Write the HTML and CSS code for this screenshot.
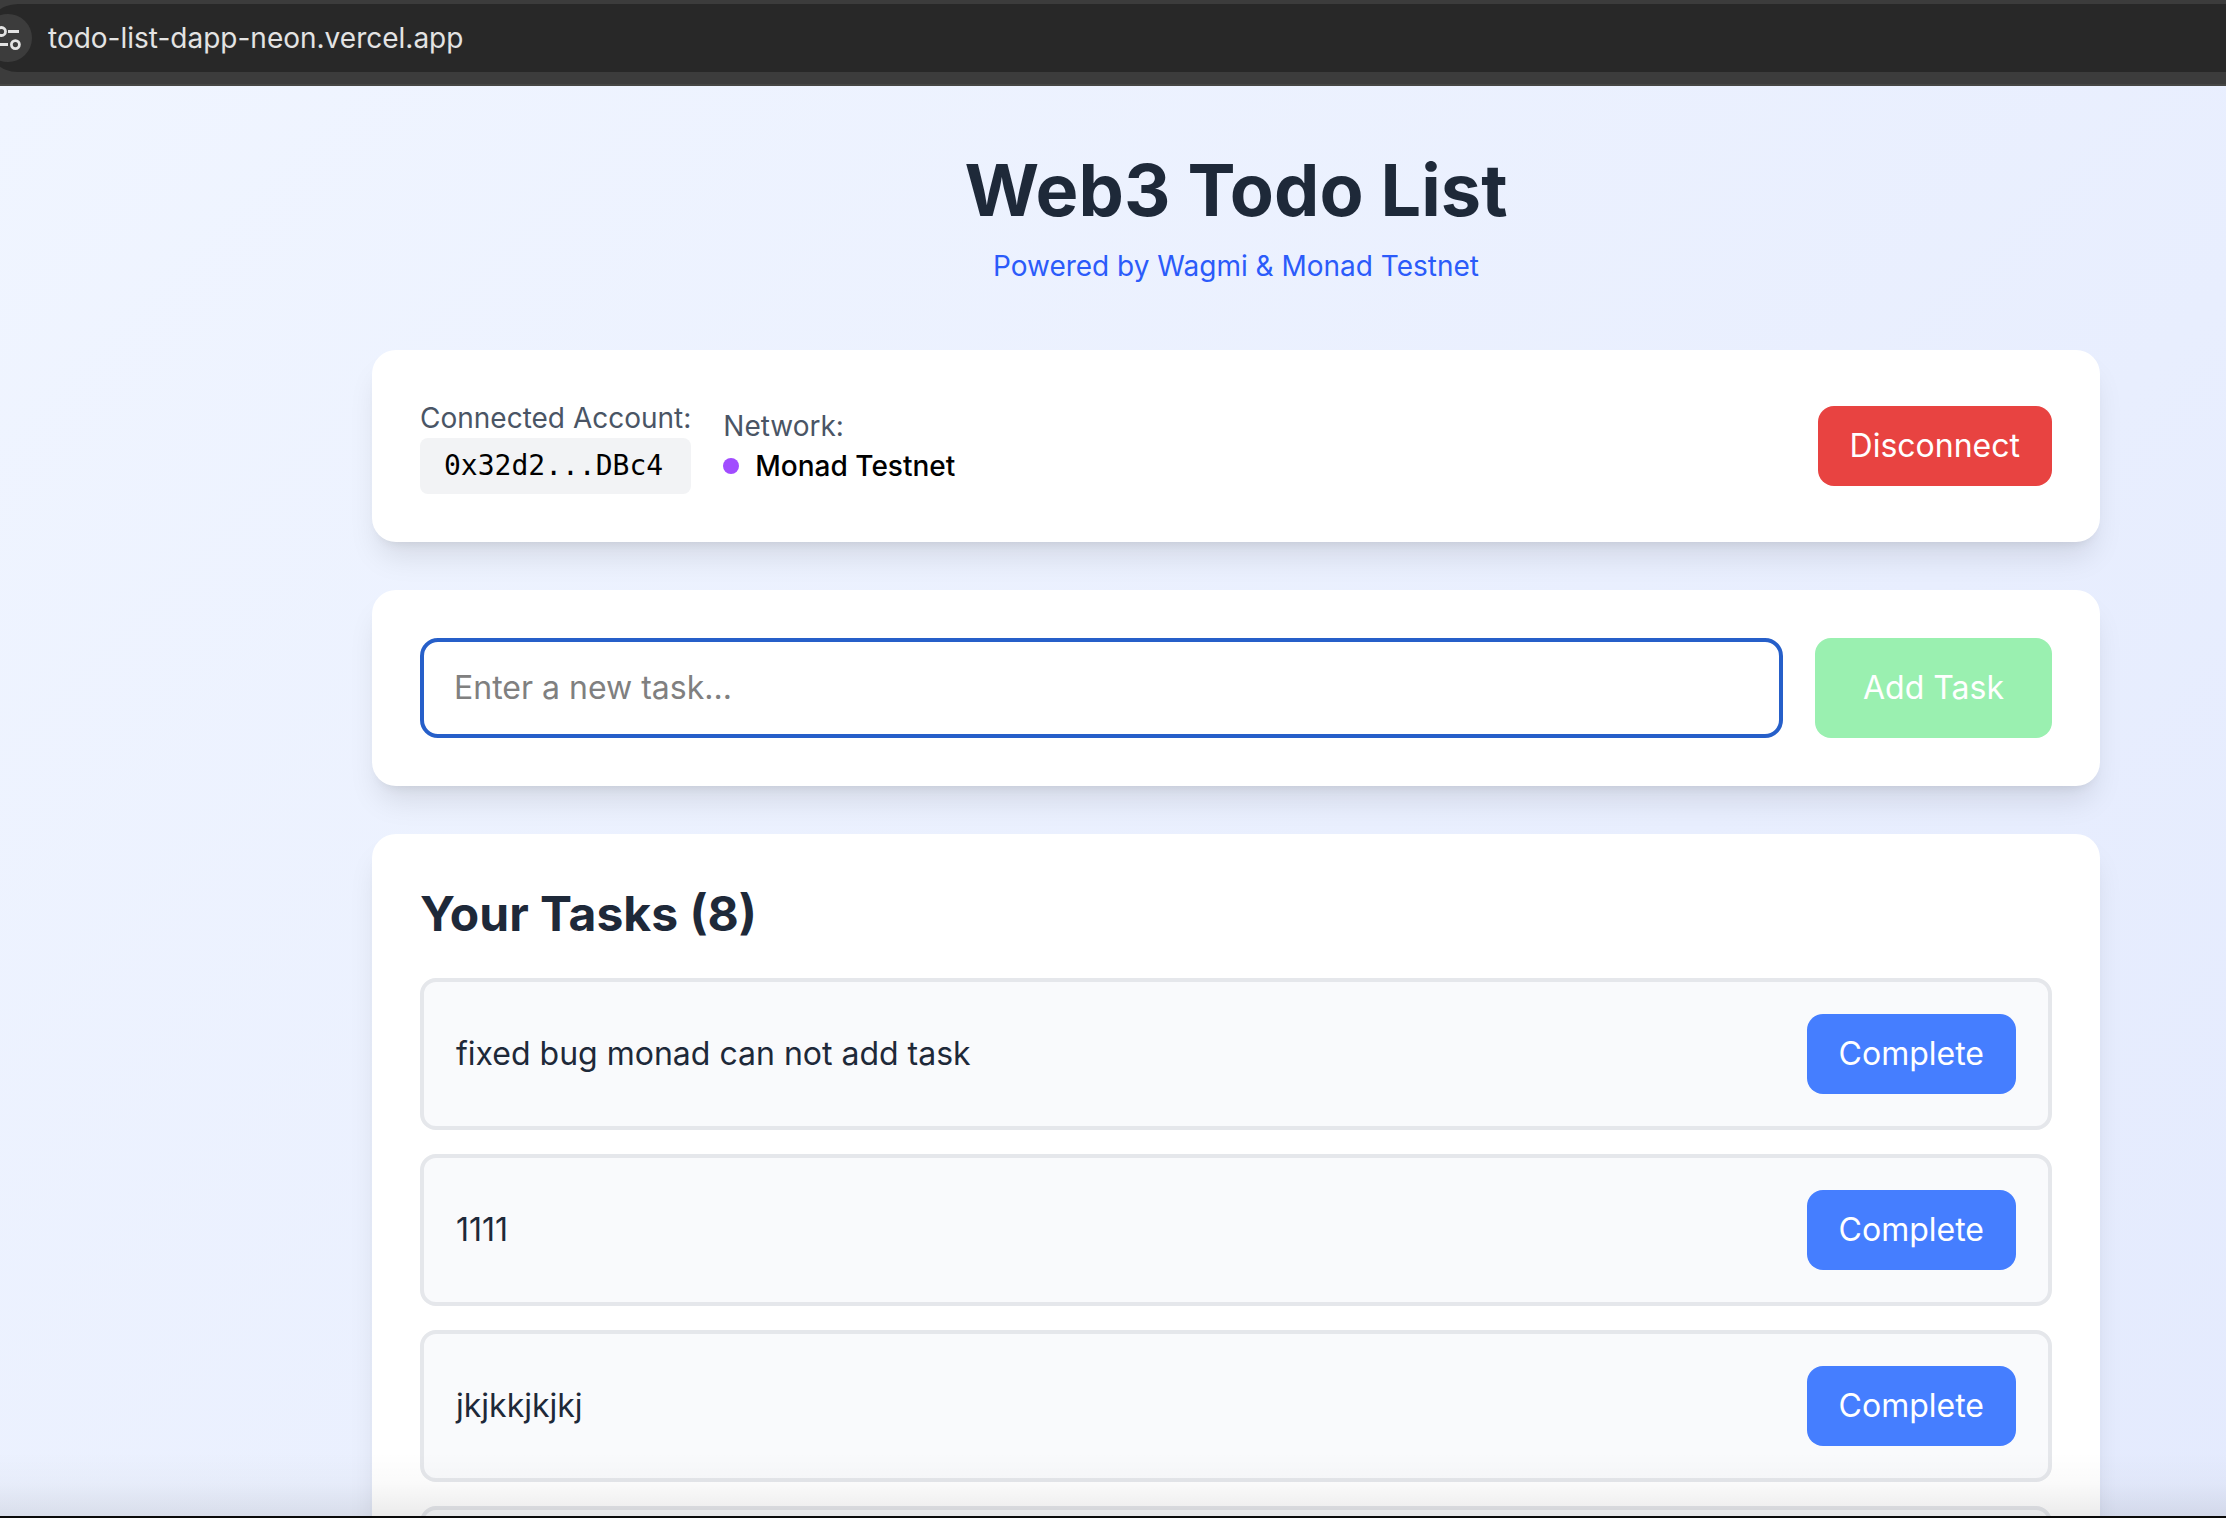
FILE: index.html
```html
<!DOCTYPE html>
<html lang="en">
<head>
<meta charset="utf-8">
<title>Web3 Todo List</title>
<link rel="stylesheet" href="styles.css">
</head>
<body>
<div class="toolbar">
  <div class="address-bar">
    <button class="site-info" type="button" aria-label="View site information">
      <svg class="tune-icon" viewBox="0 0 32 32" fill="none" stroke="currentColor" stroke-width="2.8" aria-hidden="true">
        <circle cx="9.5" cy="9.5" r="4"/>
        <path d="M16 9.5h11M4 22.5h12"/>
        <circle cx="23.4" cy="22.6" r="4"/>
      </svg>
    </button>
    <span class="url">todo-list-dapp-neon.vercel.app</span>
  </div>
</div>
<main class="page">
  <header class="hero">
    <h1 class="hero-title">Web3 Todo List</h1>
    <p class="hero-subtitle">Powered by Wagmi &amp; Monad Testnet</p>
  </header>
  <section class="card wallet">
    <div class="wallet-info">
      <div>
        <p class="label">Connected Account:</p>
        <p class="address">0x32d2...DBc4</p>
      </div>
      <div>
        <p class="label">Network:</p>
        <p class="network"><span class="dot"></span>Monad Testnet</p>
      </div>
    </div>
    <button class="btn btn-danger" type="button">Disconnect</button>
  </section>
  <form class="card add-form">
    <input class="task-input" type="text" placeholder="Enter a new task..." aria-label="New task">
    <button class="btn btn-add" type="submit" disabled>Add Task</button>
  </form>
  <section class="card">
    <h2 class="tasks-title">Your Tasks (8)</h2>
    <ul class="tasks">
      <li class="task"><span>fixed bug monad can not add task</span><button class="btn btn-primary" type="button">Complete</button></li>
      <li class="task"><span>1111</span><button class="btn btn-primary" type="button">Complete</button></li>
      <li class="task"><span>jkjkkjkjkj</span><button class="btn btn-primary" type="button">Complete</button></li>
      <li class="task"></li>
    </ul>
  </section>
</main>
<div class="bottom-edge"></div>
</body>
</html>
```
FILE: styles.css
```css
* { box-sizing: border-box; margin: 0; padding: 0; }

body {
  display: flex;
  flex-direction: column;
  height: 100vh;
  overflow: hidden;
  background: #0a0a0a;
  color: #000;
  font-family: Inter, "Liberation Sans", sans-serif;
  font-size: 32px;
  line-height: 48px;
}

/* Browser toolbar */
.toolbar {
  flex: none;
  padding: 4px 0 12px;
  background: #3c3c3c;
  border-bottom: 2px solid #464644;
}
.address-bar {
  display: flex;
  align-items: center;
  gap: 16px;
  height: 68px;
  margin-left: -16px;
  background: #282828;
  border-radius: 34px 0 0 34px;
}
.site-info {
  display: grid;
  place-items: center;
  width: 48px;
  height: 48px;
  border: 0;
  border-radius: 50%;
  background: #3c3c3c;
  color: #e3e3e3;
}
.tune-icon { width: 32px; height: 32px; }
.url { color: #e3e3e3; font-size: 28px; line-height: 40px; }

/* Page */
.page {
  position: relative;
  flex: 1;
  min-height: 0;
  overflow: hidden;
  padding: 64px 126px 0 372px;
  background: linear-gradient(135deg, #f0f5ff, #e0e7fd) 0 0 / 2472px 2388px no-repeat;
}
.page::after {
  content: "";
  position: absolute;
  inset: auto 0 0;
  height: 64px;
  background: linear-gradient(transparent, rgba(0, 0, 0, 0.02) 50%, rgba(0, 0, 0, 0.08));
  pointer-events: none;
}
.hero { margin-bottom: 64px; text-align: center; }
.hero-title { margin-bottom: 16px; color: #1e2939; font-size: 72px; line-height: 80px; font-weight: 700; }
.hero-subtitle { color: #2b5bfa; font-size: 28px; line-height: 40px; }

.card {
  margin-bottom: 48px;
  padding: 48px;
  border-radius: 24px;
  background: #fff;
  box-shadow: 0 20px 30px -6px rgba(0, 0, 0, 0.1), 0 8px 12px -8px rgba(0, 0, 0, 0.1);
}

.btn {
  padding: 16px 32px;
  border: 0;
  border-radius: 16px;
  color: #fff;
  font: inherit;
}
.btn-danger { background: #e84341; }
.btn-add { padding: 16px 48px; background: #9af0b0; }
.btn-primary { background: #457eff; }

/* Wallet */
.wallet { display: flex; align-items: center; justify-content: space-between; }
.wallet-info { display: flex; align-items: center; gap: 32px; font-size: 28px; line-height: 40px; }
.label { color: #4a5565; }
.address {
  padding: 8px 24px;
  border-radius: 8px;
  background: #f2f3f5;
  font-family: "DejaVu Sans Mono", monospace;
}
.network { display: flex; align-items: center; gap: 16px; font-weight: 500; }
.dot { width: 16px; height: 16px; border-radius: 50%; background: #a14cff; }

/* New task */
.add-form { display: flex; gap: 32px; }
.task-input {
  flex: 1;
  min-width: 0;
  height: 100px;
  padding: 0 30px 2px;
  border: 4px solid #265fc9;
  border-radius: 18px;
  outline: 0;
  background: #fff;
  color: #000;
  font: inherit;
}
.task-input::placeholder { color: #808080; opacity: 1; }

/* Task list */
.tasks-title { margin-bottom: 32px; color: #1e2939; font-size: 48px; line-height: 64px; font-weight: 700; }
.tasks { display: grid; gap: 24px; list-style: none; }
.task {
  display: flex;
  align-items: center;
  justify-content: space-between;
  min-height: 152px;
  padding: 32px;
  border: 4px solid #e5e7eb;
  border-radius: 16px;
  background: #f9fafc;
  color: #1e2939;
}

.bottom-edge { flex: none; height: 2px; background: #0a0a0a; }
```
